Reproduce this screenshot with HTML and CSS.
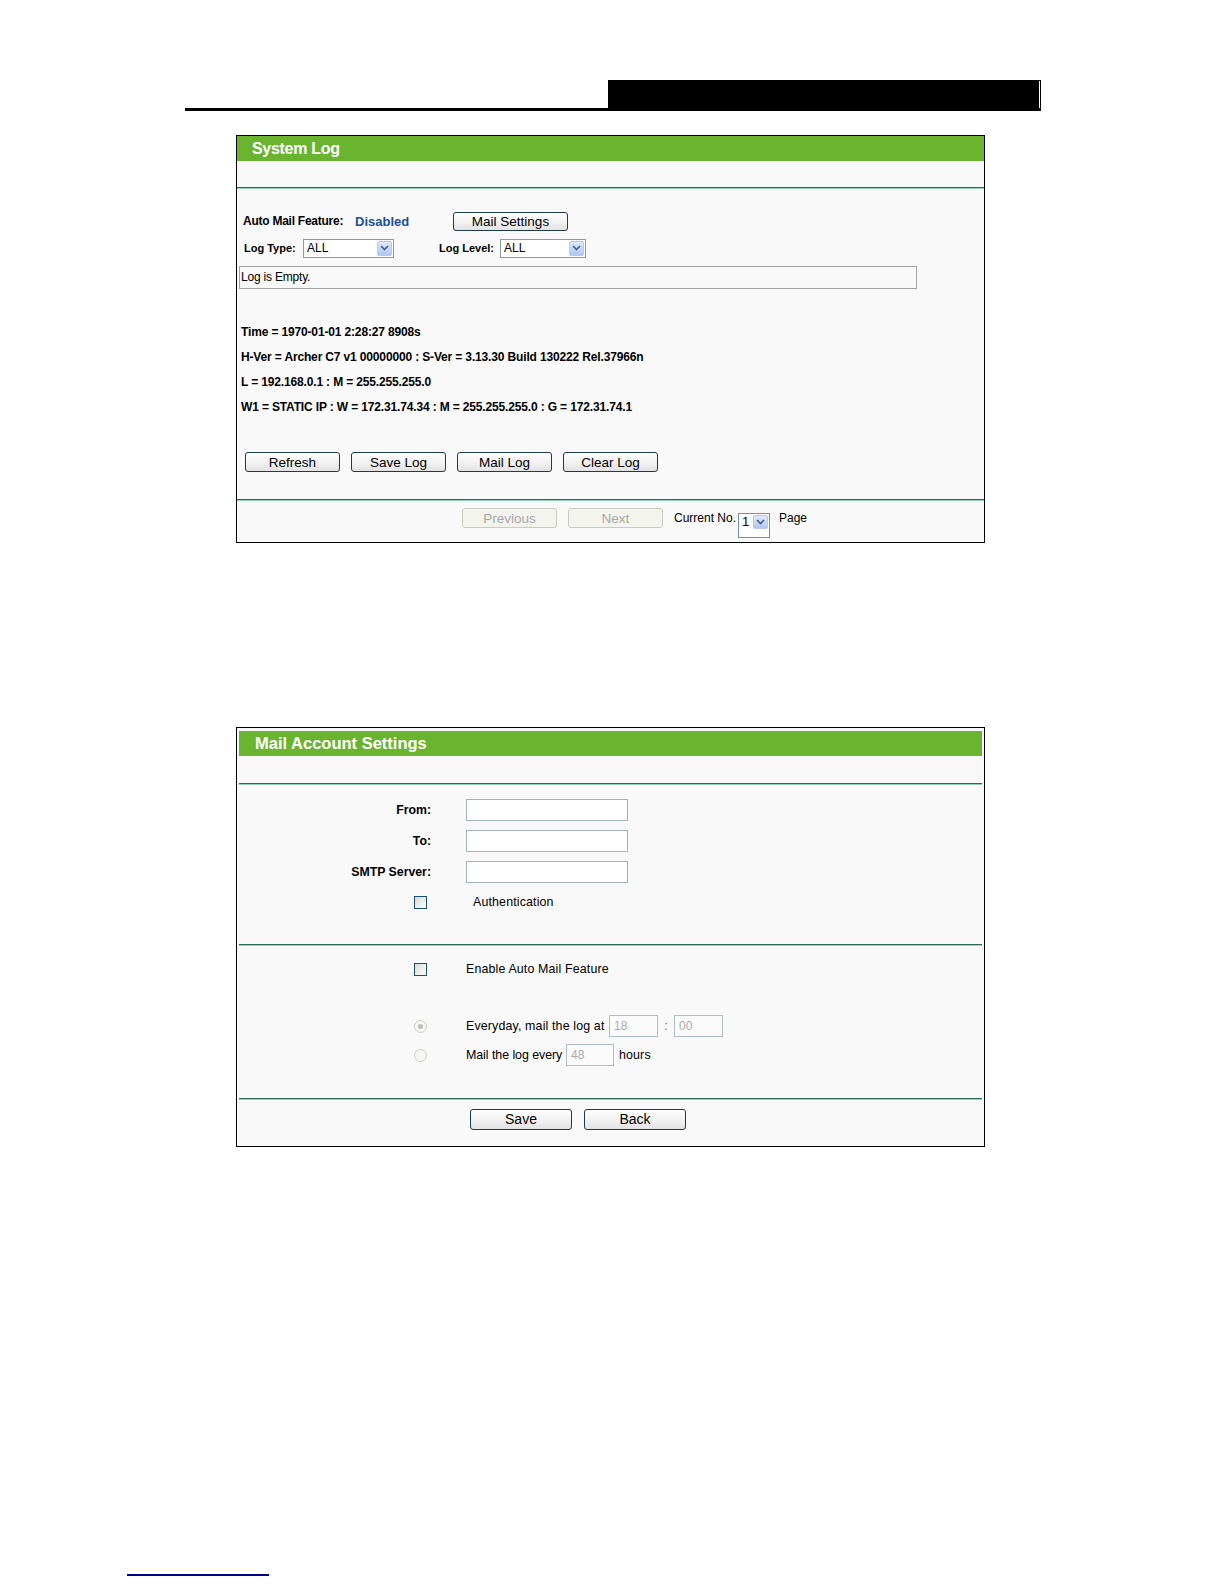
FILE: index.html
```html
<!DOCTYPE html>
<html lang="en">
<head>
<meta charset="utf-8">
<title>System Log</title>
<link rel="stylesheet" href="styles.css">
</head>
<body>
<div class="page-head">
  <div class="head-line"></div>
  <div class="head-box"></div>
</div>

<section class="panel panel-log">
  <div class="panel-title">System Log</div>
  <div class="band"></div>
  <div class="divider"></div>
  <div class="log-body">
    <div class="row row-mail">
      <span class="lbl-auto">Auto Mail Feature:</span>
      <span class="status">Disabled</span>
      <button class="btn btn-mailset">Mail Settings</button>
    </div>
    <div class="row row-filter">
      <span class="lbl-s lbl-type">Log Type:</span>
      <div class="select sel-type">
        <span class="sel-text">ALL</span>
        <span class="sel-btn"><svg width="9" height="6" viewBox="0 0 9 6"><path d="M1 1 L4.5 4.5 L8 1" fill="none" stroke="#4a5f86" stroke-width="1.7"/></svg></span>
      </div>
      <span class="lbl-s lbl-level">Log Level:</span>
      <div class="select sel-level">
        <span class="sel-text">ALL</span>
        <span class="sel-btn"><svg width="9" height="6" viewBox="0 0 9 6"><path d="M1 1 L4.5 4.5 L8 1" fill="none" stroke="#4a5f86" stroke-width="1.7"/></svg></span>
      </div>
    </div>
    <div class="log-box">Log is Empty.</div>
    <div class="log-info">
      <p>Time = 1970-01-01 2:28:27 8908s</p>
      <p>H-Ver = Archer C7 v1 00000000 : S-Ver = 3.13.30 Build 130222 Rel.37966n</p>
      <p>L = 192.168.0.1 : M = 255.255.255.0</p>
      <p>W1 = STATIC IP : W = 172.31.74.34 : M = 255.255.255.0 : G = 172.31.74.1</p>
    </div>
    <div class="actions">
      <button class="btn btn-act">Refresh</button>
      <button class="btn btn-act">Save Log</button>
      <button class="btn btn-act">Mail Log</button>
      <button class="btn btn-act">Clear Log</button>
    </div>
  </div>
  <div class="divider"></div>
  <div class="pager">
    <button class="btn btn-act btn-off">Previous</button>
    <button class="btn btn-act btn-off">Next</button>
    <span class="cur-lbl">Current No.</span>
    <div class="select sel-page">
      <span class="sel-text">1</span>
      <span class="sel-btn"><svg width="9" height="6" viewBox="0 0 9 6"><path d="M1 1 L4.5 4.5 L8 1" fill="none" stroke="#4a5f86" stroke-width="1.7"/></svg></span>
    </div>
    <span class="page-lbl">Page</span>
  </div>
</section>

<section class="panel panel-mail">
  <div class="panel-title">Mail Account Settings</div>
  <div class="band"></div>
  <div class="divider"></div>
  <div class="mail-sec sec-account">
    <div class="frow row-from">
      <label class="flabel">From:</label>
      <span class="tinput"></span>
    </div>
    <div class="frow">
      <label class="flabel">To:</label>
      <span class="tinput"></span>
    </div>
    <div class="frow">
      <label class="flabel">SMTP Server:</label>
      <span class="tinput"></span>
    </div>
    <div class="frow frow-check">
      <span class="fcell"><span class="checkbox"></span></span>
      <span class="ftext ftext-auth">Authentication</span>
    </div>
  </div>
  <div class="divider"></div>
  <div class="mail-sec sec-auto">
    <div class="frow frow-check row-enable">
      <span class="fcell"><span class="checkbox"></span></span>
      <span class="ftext">Enable Auto Mail Feature</span>
    </div>
    <div class="frow row-daily">
      <span class="fcell"><span class="radio"><span class="dot"></span></span></span>
      <span class="ftext t-daily">Everyday, mail the log at</span>
      <span class="tinput tiny off">18</span>
      <span class="colon">:</span>
      <span class="tinput tiny off">00</span>
    </div>
    <div class="frow row-every">
      <span class="fcell"><span class="radio"></span></span>
      <span class="ftext t-every">Mail the log every</span>
      <span class="tinput tiny2 off">48</span>
      <span class="ftext t-hours">hours</span>
    </div>
  </div>
  <div class="divider"></div>
  <div class="mail-foot">
    <button class="btn btn-wide">Save</button>
    <button class="btn btn-wide">Back</button>
  </div>
</section>

<div class="foot-line"></div>
</body>
</html>
```

FILE: styles.css
```css
* {
  box-sizing: border-box;
  margin: 0;
  padding: 0;
}

body {
  margin: 0;
  width: 1224px;
  background: #fff;
  color: #000;
  font-family: "Liberation Sans", Arial, sans-serif;
}

/* page header */
.page-head {
  display: flex;
  align-items: flex-end;
  margin-left: 185px;
  width: 856px;
  padding-top: 80px;
}
.head-line {
  flex: 0 0 423px;
  height: 3px;
  background: #000;
}
.head-box {
  flex: 0 0 433px;
  height: 31px;
  background: #000;
  position: relative;
}
.head-box::after {
  content: "";
  position: absolute;
  right: 1px;
  top: 1px;
  bottom: 3px;
  width: 1px;
  background: #fff;
}

/* panels */
.panel {
  margin-left: 236px;
  width: 749px;
  border: 1px solid #000;
  background: #f9f9f9;
}
.panel-log {
  margin-top: 24px;
  height: 408px;
}
.panel-mail {
  margin-top: 184px;
  height: 420px;
  padding: 3px 2px 2px;
}
.panel-title {
  height: 25px;
  line-height: 25px;
  background: #6ab42f;
  color: #fff;
  font-weight: bold;
  font-size: 16px;
  letter-spacing: -0.3px;
  padding-left: 15px;
}
.panel-mail .panel-title {
  padding-left: 16px;
  font-size: 16.5px;
  letter-spacing: 0;
}
.band {
  height: 26px;
  background: #f8f8f8;
}
.panel-mail .band {
  height: 27px;
}
.divider {
  height: 2px;
  border-top: 1px solid #2f6a55;
  background: #93cfbb;
}

/* system log body */
.log-body {
  height: 310px;
  padding-top: 22px;
}
.row {
  display: flex;
  align-items: center;
  height: 20px;
}
.row-mail {
  padding-left: 6px;
}
.lbl-auto {
  width: 112px;
  font-size: 12px;
  font-weight: bold;
  letter-spacing: -0.25px;
}
.status {
  width: 98px;
  font-size: 13px;
  font-weight: bold;
  color: #1c4f9c;
}
.btn {
  font-family: "Liberation Sans", Arial, sans-serif;
  font-size: 13.5px;
  color: #000;
  border: 1px solid #1f3955;
  border-radius: 3px;
  background: linear-gradient(to bottom, #fdfdfd 0%, #f1f1f1 55%, #e2e2e2 100%);
  line-height: 17px;
  text-align: center;
  padding: 0;
}
.btn-mailset {
  width: 115px;
  height: 19px;
}
.row-filter {
  margin-top: 7px;
  padding-left: 7px;
}
.lbl-s {
  font-size: 11px;
  font-weight: bold;
}
.lbl-type {
  width: 59px;
}
.lbl-level {
  width: 61px;
  margin-left: 45px;
}
.select {
  display: flex;
  height: 19px;
  border: 1px solid #7f9db9;
  background: #fff;
}
.sel-text {
  flex: 1;
  font-size: 12px;
  line-height: 17px;
  padding-left: 3px;
}
.sel-btn {
  width: 15px;
  height: 15px;
  margin: 1px;
  border: 1px solid #b5c9ef;
  border-radius: 2px;
  background: linear-gradient(to bottom, #e1eafd 0%, #c3d5f7 60%, #b1c7f2 100%);
  display: flex;
  align-items: center;
  justify-content: center;
}
.sel-type {
  width: 91px;
}
.sel-level {
  width: 86px;
}
.log-box {
  margin-top: 8px;
  margin-left: 2px;
  width: 678px;
  height: 23px;
  border: 1px solid #a3a3a3;
  font-size: 12px;
  line-height: 21px;
  padding-left: 1px;
  letter-spacing: -0.2px;
}
.log-info {
  margin-top: 31px;
  padding-left: 4px;
  font-size: 12px;
  font-weight: bold;
  line-height: 25px;
  letter-spacing: -0.15px;
}
.actions {
  display: flex;
  gap: 11px;
  margin-top: 32px;
  padding-left: 8px;
}
.btn-act {
  width: 95px;
  height: 20px;
}
.btn-off {
  color: #a8a8a8;
  border-color: #cbcbbd;
  background: #f4f4ee;
}

/* pager */
.pager {
  height: 41px;
  display: flex;
  align-items: flex-start;
  gap: 11px;
  padding-top: 7px;
  padding-left: 225px;
}
.cur-lbl {
  font-size: 12px;
  line-height: 20px;
  width: 64px;
  margin-right: -11px;
  white-space: nowrap;
}
.sel-page {
  width: 32px;
  height: 25px;
  margin-top: 5px;
  border-color: #6f8fc0;
  align-items: flex-start;
}
.sel-page .sel-text {
  font-size: 13px;
  line-height: 16px;
}
.sel-page .sel-btn {
  height: 14px;
}
.page-lbl {
  font-size: 12px;
  line-height: 20px;
  margin-left: -2px;
}

/* mail account settings */
.sec-account {
  height: 159px;
  padding-top: 14px;
}
.sec-auto {
  height: 152px;
  padding-top: 13px;
}
.frow {
  display: flex;
  align-items: center;
  height: 22px;
  margin-bottom: 9px;
}
.frow-check {
  height: 20px;
}
.flabel,
.fcell {
  width: 192px;
  margin-right: 35px;
  font-size: 12.3px;
  font-weight: bold;
  text-align: right;
}
.fcell {
  display: flex;
  justify-content: flex-end;
  padding-right: 4px;
}
.tinput {
  display: block;
  width: 162px;
  height: 22px;
  border: 1px solid #a5b2c2;
  background: #fff;
  font-size: 12px;
  line-height: 20px;
  padding-left: 4px;
}
.tinput.off {
  color: #ababab;
  border-color: #adbccf;
  background: #fbfbfb;
}
.tiny {
  width: 49px;
}
.tiny2 {
  width: 48px;
}
.checkbox {
  display: block;
  width: 13px;
  height: 13px;
  border: 1px solid #1d4f7d;
  background: linear-gradient(135deg, #d9d9d3 0%, #f0f0ec 60%, #fdfdfb 100%);
}
.radio {
  display: flex;
  align-items: center;
  justify-content: center;
  width: 13px;
  height: 13px;
  border-radius: 50%;
  border: 1px solid #cfcdc2;
  background: #f6f6f2;
}
.dot {
  width: 5px;
  height: 5px;
  border-radius: 50%;
  background: #bdbdb4;
}
.ftext {
  font-size: 12.4px;
  line-height: 20px;
  letter-spacing: 0.15px;
}
.ftext-auth {
  margin-left: 7px;
}
.row-enable {
  margin-bottom: 36px;
}
.row-daily {
  margin-bottom: 7px;
}
.t-daily {
  width: 143px;
}
.colon {
  width: 16px;
  text-align: center;
  font-size: 12px;
  color: #666;
}
.t-every {
  width: 100px;
  letter-spacing: -0.05px;
  white-space: nowrap;
}
.t-hours {
  margin-left: 5px;
}
.mail-foot {
  display: flex;
  gap: 12px;
  height: 44px;
  padding-top: 9px;
  padding-left: 231px;
}
.btn-wide {
  width: 102px;
  height: 21px;
  font-size: 14px;
}

.foot-line {
  margin-top: 427px;
  margin-left: 127px;
  width: 142px;
  height: 2px;
  background: #00008b;
}
```
